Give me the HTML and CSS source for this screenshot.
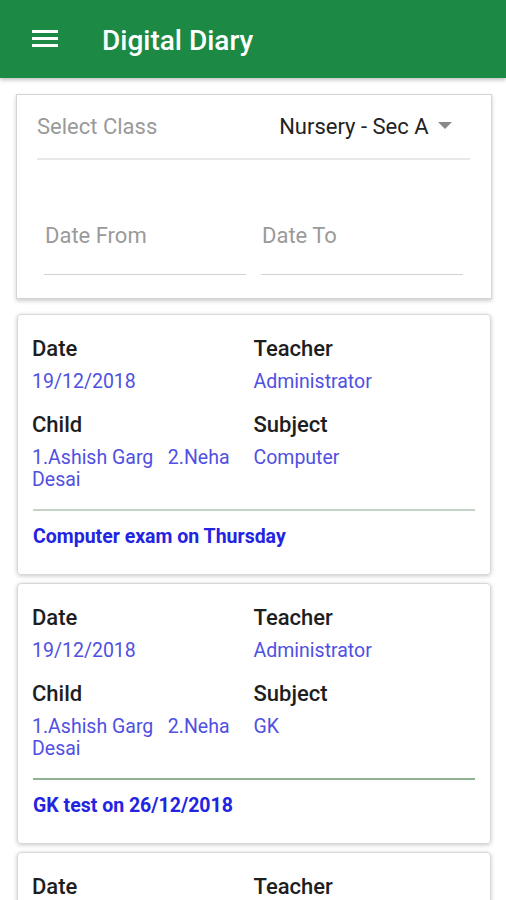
FILE: index.html
```html
<!DOCTYPE html>
<html>
<head>
    <title>Digital Diary</title>
    <link rel="stylesheet" href="styles.css">
</head>
<body>
    <div class="appbar">
        <svg class="menu-icon" width="26" height="20" viewBox="0 0 26 20">
            <rect x="0" y="1" width="26" height="3" fill="#fff"/>
            <rect x="0" y="8" width="26" height="3" fill="#fff"/>
            <rect x="0" y="15" width="26" height="3" fill="#fff"/>
        </svg>
        <h1>Digital Diary</h1>
    </div>

    <div class="content">
        <div class="filter">
            <div class="select-row">
                <span class="hint">Select Class</span>
                <span class="select-value">Nursery - Sec A
                    <svg class="caret" width="14" height="7" viewBox="0 0 14 7"><path d="M0 0 L14 0 L7 7 Z" fill="#8a8a8a"/></svg>
                </span>
            </div>
            <div class="date-row">
                <div class="date-field">Date From</div>
                <div class="date-field">Date To</div>
            </div>
        </div>

        <div class="entry">
            <div class="grid">
                <div>
                    <div class="label">Date</div>
                    <div class="value">19/12/2018</div>
                </div>
                <div>
                    <div class="label">Teacher</div>
                    <div class="value">Administrator</div>
                </div>
                <div>
                    <div class="label">Child</div>
                    <div class="value">1.Ashish Garg   2.Neha Desai</div>
                </div>
                <div>
                    <div class="label">Subject</div>
                    <div class="value">Computer</div>
                </div>
            </div>
            <hr class="rule light">
            <div class="note">Computer exam on Thursday</div>
        </div>

        <div class="entry">
            <div class="grid">
                <div>
                    <div class="label">Date</div>
                    <div class="value">19/12/2018</div>
                </div>
                <div>
                    <div class="label">Teacher</div>
                    <div class="value">Administrator</div>
                </div>
                <div>
                    <div class="label">Child</div>
                    <div class="value">1.Ashish Garg   2.Neha Desai</div>
                </div>
                <div>
                    <div class="label">Subject</div>
                    <div class="value">GK</div>
                </div>
            </div>
            <hr class="rule">
            <div class="note">GK test on 26/12/2018</div>
        </div>

        <div class="entry">
            <div class="grid">
                <div>
                    <div class="label">Date</div>
                    <div class="value">18/12/2018</div>
                </div>
                <div>
                    <div class="label">Teacher</div>
                    <div class="value">Administrator</div>
                </div>
                <div>
                    <div class="label">Child</div>
                    <div class="value">1.Ashish Garg   2.Neha Desai</div>
                </div>
                <div>
                    <div class="label">Subject</div>
                    <div class="value">English</div>
                </div>
            </div>
            <hr class="rule">
            <div class="note">Bring drawing book</div>
        </div>
    </div>
</body>
</html>
```

FILE: styles.css
```css
body {
    font-family: Roboto, "Noto Sans", Arial, sans-serif;
    margin: 0;
    background: #fff;
    color: #1e1e1e;
    overflow: hidden;
}
.appbar {
    height: 78px;
    background: #1c8a44;
    display: flex;
    align-items: center;
    box-shadow: 0 2px 4px rgba(0,0,0,0.25);
    position: relative;
}
.menu-icon {
    margin-left: 32px;
    margin-top: 0;
}
.appbar h1 {
    margin: 0 0 0 44px;
    color: #fff;
    font-size: 28px;
    font-weight: 500;
    padding-top: 2px;
}
.content {
    padding: 16px 14px 0 16px;
}
.filter {
    border: 1px solid #d4d4d4;
    box-shadow: 0 2px 4px rgba(0,0,0,0.2);
    padding: 0 21px 23px 20px;
    margin-bottom: 15px;
}
.select-row {
    height: 63px;
    display: flex;
    align-items: center;
    justify-content: space-between;
    border-bottom: 2px solid #e8e8e8;
    font-size: 22px;
}
.hint {
    color: #9a9a9a;
}
.select-value {
    color: #222;
    margin-right: 18px;
}
.caret {
    margin-left: 4px;
    vertical-align: middle;
    position: relative;
    top: -3px;
}
.date-row {
    display: flex;
    gap: 15px;
    margin: 40px 7px 0 7px;
}
.date-field {
    flex: 1;
    padding: 24px 0 26px 1px;
    line-height: 24px;
    font-size: 22px;
    color: #9a9a9a;
    border-bottom: 1px solid #d2d2d2;
}
.entry {
    margin: 0 1px 8px 1px;
    border: 1px solid #d8d8d8;
    border-radius: 4px;
    box-shadow: 0 1px 4px rgba(0,0,0,0.22);
    padding: 21px 15px 26px 14px;
}
.grid {
    display: grid;
    grid-template-columns: 1fr 1fr;
    row-gap: 19px;
}
.label {
    font-size: 22px;
    line-height: 26px;
    font-weight: 500;
    color: #1e1e1e;
}
.value {
    font-size: 19.5px;
    line-height: 22px;
    margin-top: 9px;
    color: #5050e2;
    white-space: pre-wrap;
    padding-right: 12px;
}
.rule {
    margin: 18px 0 0 1px;
    border: none;
    height: 2px;
    background: #8fb391;
}
.rule.light {
    background: #c5d4c8;
}
.note {
    margin-top: 15px;
    font-size: 19.5px;
    line-height: 22px;
    font-weight: bold;
    color: #2323e2;
    padding-left: 1px;
}
```
